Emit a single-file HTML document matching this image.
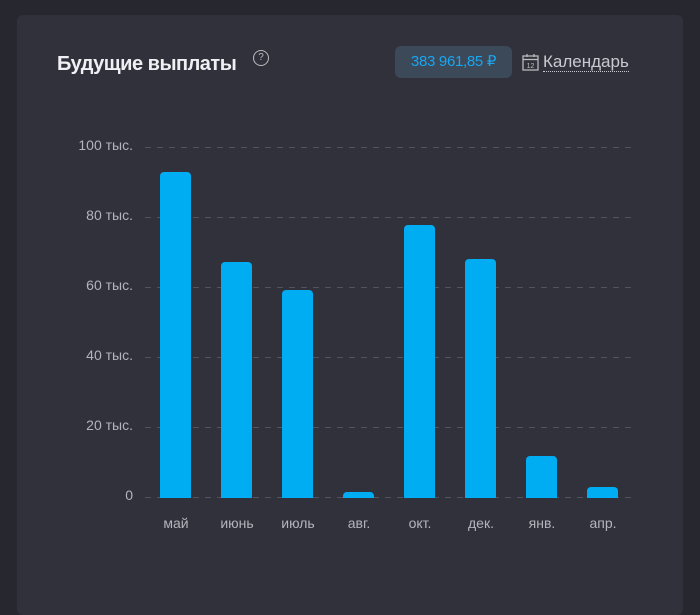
<!DOCTYPE html><html><head><meta charset="utf-8"><style>
body{margin:0;width:700px;height:592px;background:#27272f;font-family:"Liberation Sans",sans-serif;overflow:hidden;position:relative}
.card{position:absolute;left:17px;top:15px;width:666px;height:600px;background:#31313c;border-radius:6px}
.t{position:absolute;left:57px;top:53px;font-size:20px;font-weight:bold;color:#f0f0f4;letter-spacing:-0.5px}
.q{position:absolute;left:253px;top:50px;width:14px;height:14px;border:1px solid #bbb;border-radius:50%;color:#bbb;font-size:10px;text-align:center;line-height:14px}
.pill{position:absolute;left:395px;top:46px;width:117px;height:32px;background:#3c4959;border-radius:6px;color:#19a6f0;font-size:15px;text-align:center;line-height:32px;letter-spacing:-0.3px}
.cal{position:absolute;left:543px;top:52px;font-size:17px;color:#c9c9d1;border-bottom:1px dotted #c9c9d1;line-height:19px}
.g{position:absolute;left:145px;width:488px;height:1px;background:repeating-linear-gradient(90deg,#53535f 0 6px,transparent 6px 12px)}
.yl{position:absolute;right:567px;font-size:14px;color:#b4b4bc;text-align:right}
.b{position:absolute;width:31px;background:#00adf2;border-radius:4px 4px 0 0;bottom:94px}
.xl{position:absolute;top:515px;width:60px;margin-left:-30px;text-align:center;font-size:14px;color:#b4b4bc}
</style></head><body>
<div class="card"></div>
<div class="t">Будущие выплаты</div>
<div class="q">?</div>
<div class="pill">383 961,85 ₽</div>
<svg style="position:absolute;left:522px;top:53px" width="17" height="18" viewBox="0 0 17 18"><rect x="1" y="3" width="15" height="14" fill="none" stroke="#bbb" stroke-width="1.3"/><line x1="1" y1="6.5" x2="16" y2="6.5" stroke="#bbb" stroke-width="1.3"/><line x1="5" y1="1" x2="5" y2="4" stroke="#bbb" stroke-width="1.3"/><line x1="12" y1="1" x2="12" y2="4" stroke="#bbb" stroke-width="1.3"/><text x="8.5" y="15" font-size="7" fill="#bbb" text-anchor="middle" font-family="Liberation Sans">12</text></svg>
<div class="cal">Календарь</div>
<div class="g" style="top:147px"></div><div class="g" style="top:217px"></div><div class="g" style="top:287px"></div><div class="g" style="top:357px"></div><div class="g" style="top:427px"></div><div class="g" style="top:497px"></div>
<div class="yl" style="top:137px">100 тыс.</div><div class="yl" style="top:207px">80 тыс.</div><div class="yl" style="top:277px">60 тыс.</div><div class="yl" style="top:347px">40 тыс.</div><div class="yl" style="top:417px">20 тыс.</div><div class="yl" style="top:487px">0</div>
<div class="b" style="left:160px;height:326px"></div>
<div class="b" style="left:221px;height:236px"></div>
<div class="b" style="left:282px;height:208px"></div>
<div class="b" style="left:343px;height:6px"></div>
<div class="b" style="left:404px;height:273px"></div>
<div class="b" style="left:465px;height:239px"></div>
<div class="b" style="left:526px;height:42px"></div>
<div class="b" style="left:587px;height:11px"></div>
<div class="xl" style="left:176px">май</div><div class="xl" style="left:237px">июнь</div><div class="xl" style="left:298px">июль</div><div class="xl" style="left:359px">авг.</div><div class="xl" style="left:420px">окт.</div><div class="xl" style="left:481px">дек.</div><div class="xl" style="left:542px">янв.</div><div class="xl" style="left:603px">апр.</div>
</body></html>
